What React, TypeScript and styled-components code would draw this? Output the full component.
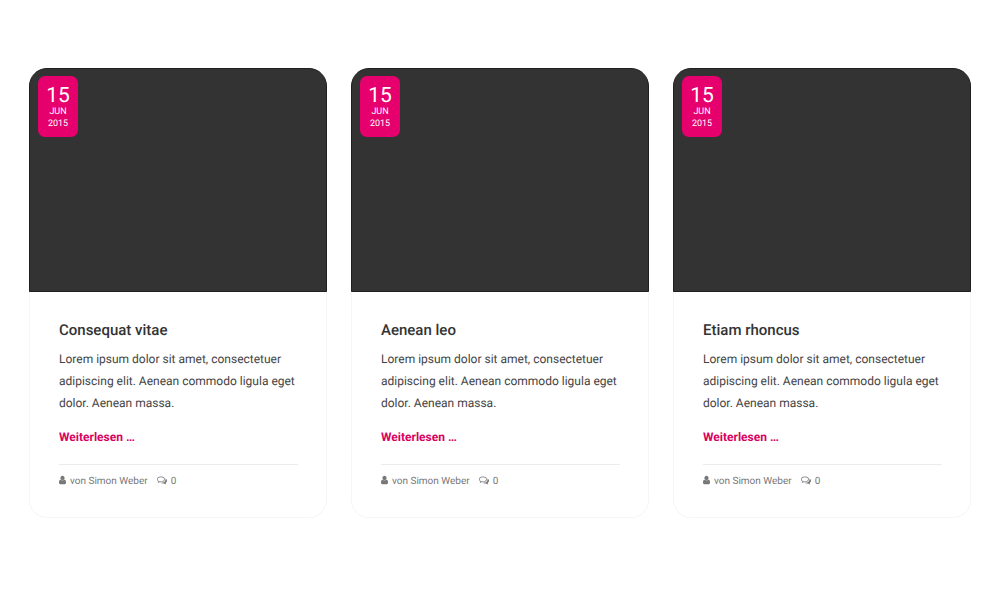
import React from "react";
import styled, { createGlobalStyle } from "styled-components";

const GlobalStyle = createGlobalStyle`
  *, *::before, *::after { box-sizing: border-box; }
  body {
    margin: 0;
    background: #fff;
    color: #444;
    font-family: Roboto, "Liberation Sans", sans-serif;
    font-size: 12px;
    line-height: 22px;
    text-rendering: geometricPrecision;
  }
`;

const Teasers = styled.main`
  display: grid;
  grid-template-columns: repeat(3, minmax(0, 1fr));
  gap: 24px;
  padding: 68px 29px;
`;

const Card = styled.article`
  display: flex;
  flex-direction: column;
  border-radius: 18px;
  background: #fff;
  box-shadow: inset 0 0 0 1px #f6f6f6;
`;

const Cover = styled.div`
  padding: 7px 8px;
  height: 224px;
  border: 1px solid #1f1f1f;
  border-radius: 18px 18px 0 0;
  background: #333;
`;

const DateBadge = styled.time`
  display: flex;
  flex-direction: column;
  align-items: center;
  width: 40px;
  height: 61px;
  padding-top: 10px;
  border-radius: 7px;
  background: #e6006e;
  color: #fff;
  font-size: 9px;
  line-height: 12px;
`;

const Day = styled.span`
  font-size: 21px;
  line-height: 20px;
`;

const Body = styled.div`
  padding: 27px 29px 26px 30px;
`;

const Title = styled.h2`
  margin: 0 0 7px;
  color: #333;
  font-size: 15px;
  font-weight: 500;
  line-height: 22px;
`;

const Excerpt = styled.p`
  margin: 0 0 12px;
`;

const ReadMore = styled.a`
  display: inline-block;
  color: #d9005f;
  font-weight: 700;
  text-decoration: none;
`;

const Meta = styled.footer`
  display: flex;
  gap: 9px;
  margin-top: 16px;
  padding-top: 7px;
  border-top: 1px solid #ececec;
  color: #777;
  font-size: 10px;
  line-height: 20px;
`;

const MetaItem = styled.span`
  display: flex;
  align-items: center;
  gap: 4px;
`;

const Icon = styled.svg`
  height: 10px;
  margin-bottom: 4px;
  fill: currentColor;
`;

const UserIcon = () => (
  <Icon width="7" viewBox="256 128 1280 1536" aria-hidden="true">
    <path d="M1536 1399q0 109-62.5 187t-150.5 78h-854q-88 0-150.5-78t-62.5-187q0-85 8.5-160.5t31.5-152 58.5-131 94-89 134.5-34.5q131 128 313 128t313-128q76 0 134.5 34.5t94 89 58.5 131 31.5 152 8.5 160.5zm-256-887q0 159-112.5 271.5t-271.5 112.5-271.5-112.5-112.5-271.5 112.5-271.5 271.5-112.5 271.5 112.5 112.5 271.5z" />
  </Icon>
);

const CommentsIcon = () => (
  <Icon width="10" viewBox="0 0 1792 1792" aria-hidden="true">
    <path d="M704 384q-153 0-286 52t-211.5 141-78.5 191q0 82 53 158t149 132l97 56-35 84q34-20 62-39l44-31 53 10q78 14 153 14 153 0 286-52t211.5-141 78.5-191-78.5-191-211.5-141-286-52zm0-128q191 0 353.5 68.5t256.5 186.5 94 257-94 257-256.5 186.5-353.5 68.5q-86 0-176-16-124 88-278 128-36 9-86 16h-3q-11 0-20.5-8t-11.5-21q-1-3-1-6.5t.5-6.5 2-6l2.5-5 3.5-5.5 4-5 4.5-5 4-4.5q5-6 23-25t26-29.5 22.5-29 25-38.5 20.5-44q-124-72-195-177t-71-224q0-139 94-257t256.5-186.5 353.5-68.5zm822 1169q10 24 20.5 44t25 38.5 22.5 29 26 29.5 23 25q1 1 4 4.5t4.5 5 4 5 3.5 5.5l2.5 5 2 6 .5 6.5-1 6.5q-3 14-13 22t-22 7q-50-7-86-16-154-40-278-128-90 16-176 16-271 0-472-132 58 4 88 4 161 0 309-45t264-129q125-92 192-212t67-254q0-77-23-152 129 71 204 178t75 230q0 120-71 224.5t-195 176.5z" />
  </Icon>
);

const titles = ["Consequat vitae", "Aenean leo", "Etiam rhoncus"];

export default function App() {
  return (
    <>
      <GlobalStyle />
      <Teasers>
        {titles.map((title) => (
          <Card key={title}>
            <Cover>
              <DateBadge dateTime="2015-06-15">
                <Day>15</Day>
                <span>JUN</span>
                <span>2015</span>
              </DateBadge>
            </Cover>
            <Body>
              <Title>{title}</Title>
              <Excerpt>
                Lorem ipsum dolor sit amet, consectetuer adipiscing elit. Aenean commodo ligula eget dolor. Aenean massa.
              </Excerpt>
              <ReadMore href="#">Weiterlesen …</ReadMore>
              <Meta>
                <MetaItem>
                  <UserIcon />
                  von Simon Weber
                </MetaItem>
                <MetaItem>
                  <CommentsIcon />0
                </MetaItem>
              </Meta>
            </Body>
          </Card>
        ))}
      </Teasers>
    </>
  );
}
